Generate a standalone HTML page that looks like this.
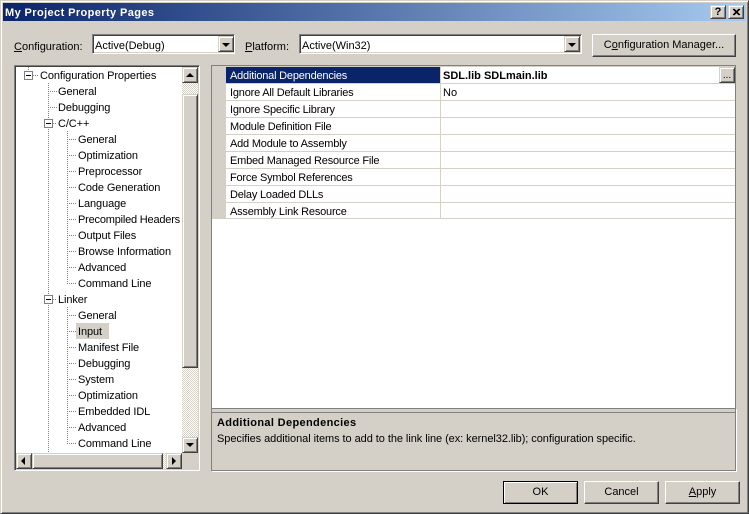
<!DOCTYPE html>
<html><head><meta charset="utf-8"><style>
html,body{margin:0;padding:0;background:#d4d0c8}
body{width:749px;height:514px;position:relative;overflow:hidden;font:11px/16px "Liberation Sans",Arial,sans-serif;color:#000}
div{position:absolute;box-sizing:border-box}
.t{white-space:nowrap;height:16px;margin-top:1px}
.n{letter-spacing:-.1px}
.g{letter-spacing:-.2px}
.raised{background:#d4d0c8;border:1px solid;border-color:#d4d0c8 #404040 #404040 #d4d0c8;box-shadow:inset 1px 1px 0 #fff,inset -1px -1px 0 #808080}
.sunken{border:1px solid;border-color:#808080 #fff #fff #808080;box-shadow:inset 1px 1px 0 #404040,inset -1px -1px 0 #d4d0c8;background:#fff}
.hatch{background-color:#fff;background-image:conic-gradient(#d4d0c8 25%,#fff 0 50%,#d4d0c8 0 75%,#fff 0);background-size:2px 2px}
.vd{width:1px;background-image:linear-gradient(#808080 50%,transparent 50%);background-size:1px 2px}
.hd{height:1px;background-image:linear-gradient(90deg,#808080 50%,transparent 50%);background-size:2px 1px}
.box{width:9px;height:9px;border:1px solid #808080;background:#fff}
.box:after{content:"";position:absolute;left:1px;top:3px;width:5px;height:1px;background:#000}
.tri{width:0;height:0;border-style:solid;border-color:transparent}
.line{height:1px;background:#d4d0c8}
u{text-decoration:underline}
.btn{text-align:center;border-color:#fff #404040 #404040 #fff;box-shadow:inset -1px -1px 0 #808080}
</style></head><body>
<div style="left:0;top:0;width:749px;height:514px;border:1px solid;border-color:#d4d0c8 #404040 #404040 #d4d0c8;box-shadow:inset 1px 1px 0 #fff,inset -1px -1px 0 #808080"></div>
<div style="left:3px;top:3px;width:743px;height:18px;background:linear-gradient(90deg,#0a246a,#a6caf0)"></div>
<div class="t" style="left:5px;top:4px;color:#fff;font-weight:bold;letter-spacing:.4px;line-height:17px">My Project Property Pages</div>
<div class="raised" style="left:710px;top:5px;width:16px;height:14px;font:bold 11px/12px 'Liberation Sans',sans-serif;text-align:center">?</div>
<div class="raised" style="left:728px;top:5px;width:16px;height:14px"><svg width="14" height="12" style="position:absolute;left:0;top:0"><path d="M4 3l6 6M5 3l6 6M10 3l-6 6M11 3l-6 6" stroke="#000" fill="none"/></svg></div>

<div class="t" style="left:14px;top:38px"><u>C</u>onfiguration:</div>
<div class="sunken" style="left:92px;top:34px;width:143px;height:20px"></div>
<div class="t" style="left:95px;top:37px">Active(Debug)</div>
<div class="raised" style="left:218px;top:36px;width:16px;height:16px"></div>
<div class="tri" style="left:222px;top:43px;border-width:4px 4px 0;border-top-color:#000"></div>
<div class="t" style="left:245px;top:38px"><u>P</u>latform:</div>
<div class="sunken" style="left:299px;top:34px;width:283px;height:20px"></div>
<div class="t" style="left:302px;top:37px">Active(Win32)</div>
<div class="raised" style="left:564px;top:36px;width:16px;height:16px"></div>
<div class="tri" style="left:568px;top:43px;border-width:4px 4px 0;border-top-color:#000"></div>
<div class="raised btn" style="left:592px;top:34px;width:144px;height:23px;line-height:21px">C<u>o</u>nfiguration Manager...</div>

<!-- tree -->
<div class="sunken" style="left:14px;top:65px;width:186px;height:406px"></div>
<div class="vd" style="left:28px;top:67px;height:6px"></div>
<div class="hd" style="left:33px;top:75px;width:6px"></div>
<div class="box" style="left:24px;top:71px"></div>
<div class="t n" style="left:40px;top:67px">Configuration Properties</div>

<div class="vd" style="left:48px;top:83px;height:369px"></div>
<div class="hd" style="left:48px;top:91px;width:9px"></div><div class="t n" style="left:58px;top:83px">General</div>
<div class="hd" style="left:48px;top:107px;width:9px"></div><div class="t n" style="left:58px;top:99px">Debugging</div>
<div class="box" style="left:44px;top:119px"></div><div class="hd" style="left:53px;top:123px;width:4px"></div><div class="t n" style="left:58px;top:115px">C/C++</div>
<div class="vd" style="left:67px;top:131px;height:152px"></div>
<div class="hd" style="left:67px;top:139px;width:9px"></div><div class="t n" style="left:78px;top:131px">General</div>
<div class="hd" style="left:67px;top:155px;width:9px"></div><div class="t n" style="left:78px;top:147px">Optimization</div>
<div class="hd" style="left:67px;top:171px;width:9px"></div><div class="t n" style="left:78px;top:163px">Preprocessor</div>
<div class="hd" style="left:67px;top:187px;width:9px"></div><div class="t n" style="left:78px;top:179px">Code Generation</div>
<div class="hd" style="left:67px;top:203px;width:9px"></div><div class="t n" style="left:78px;top:195px">Language</div>
<div class="hd" style="left:67px;top:219px;width:9px"></div><div class="t g" style="left:78px;top:211px">Precompiled Headers</div>
<div class="hd" style="left:67px;top:235px;width:9px"></div><div class="t n" style="left:78px;top:227px">Output Files</div>
<div class="hd" style="left:67px;top:251px;width:9px"></div><div class="t n" style="left:78px;top:243px">Browse Information</div>
<div class="hd" style="left:67px;top:267px;width:9px"></div><div class="t n" style="left:78px;top:259px">Advanced</div>
<div class="hd" style="left:67px;top:283px;width:9px"></div><div class="t n" style="left:78px;top:275px">Command Line</div>
<div class="box" style="left:44px;top:295px"></div><div class="hd" style="left:53px;top:299px;width:4px"></div><div class="t n" style="left:58px;top:291px">Linker</div>
<div class="vd" style="left:67px;top:307px;height:136px"></div>
<div class="hd" style="left:67px;top:315px;width:9px"></div><div class="t n" style="left:78px;top:307px">General</div>
<div style="left:76px;top:323px;width:33px;height:16px;background:#d4d0c8"></div>
<div class="hd" style="left:67px;top:331px;width:9px"></div><div class="t n" style="left:78px;top:323px">Input</div>
<div class="hd" style="left:67px;top:347px;width:9px"></div><div class="t n" style="left:78px;top:339px">Manifest File</div>
<div class="hd" style="left:67px;top:363px;width:9px"></div><div class="t n" style="left:78px;top:355px">Debugging</div>
<div class="hd" style="left:67px;top:379px;width:9px"></div><div class="t n" style="left:78px;top:371px">System</div>
<div class="hd" style="left:67px;top:395px;width:9px"></div><div class="t n" style="left:78px;top:387px">Optimization</div>
<div class="hd" style="left:67px;top:411px;width:9px"></div><div class="t n" style="left:78px;top:403px">Embedded IDL</div>
<div class="hd" style="left:67px;top:427px;width:9px"></div><div class="t n" style="left:78px;top:419px">Advanced</div>
<div class="hd" style="left:67px;top:443px;width:9px"></div><div class="t n" style="left:78px;top:435px">Command Line</div>

<!-- vertical scrollbar -->
<div class="hatch" style="left:182px;top:83px;width:16px;height:355px"></div>
<div class="raised" style="left:182px;top:67px;width:16px;height:16px"></div>
<div class="tri" style="left:186px;top:73px;border-width:0 4px 4px;border-bottom-color:#000"></div>
<div class="raised" style="left:182px;top:94px;width:16px;height:274px"></div>
<div class="raised" style="left:182px;top:437px;width:16px;height:16px"></div>
<div class="tri" style="left:186px;top:443px;border-width:4px 4px 0;border-top-color:#000"></div>
<!-- horizontal scrollbar -->
<div style="left:16px;top:453px;width:182px;height:16px;background:#d4d0c8"></div>
<div class="hatch" style="left:32px;top:453px;width:135px;height:16px"></div>
<div class="raised" style="left:16px;top:453px;width:16px;height:16px"></div>
<div class="tri" style="left:21px;top:457px;border-width:4px 4px 4px 0;border-right-color:#000"></div>
<div class="raised" style="left:32px;top:453px;width:131px;height:16px"></div>
<div class="raised" style="left:166px;top:453px;width:16px;height:16px"></div>
<div class="tri" style="left:172px;top:457px;border-width:4px 0 4px 4px;border-left-color:#000"></div>

<!-- grid -->
<div style="left:211px;top:65px;width:525px;height:344px;background:#fff;border:1px solid #808080;box-shadow:inset 0 1px 0 #d4d0c8"></div>
<div style="left:212px;top:66px;width:14px;height:153px;background:#d4d0c8"></div>
<div style="left:226px;top:67px;width:214px;height:16px;background:#0a246a"></div>
<div class="line" style="left:226px;top:83px;width:509px"></div>
<div class="line" style="left:226px;top:100px;width:509px"></div>
<div class="line" style="left:226px;top:117px;width:509px"></div>
<div class="line" style="left:226px;top:134px;width:509px"></div>
<div class="line" style="left:226px;top:151px;width:509px"></div>
<div class="line" style="left:226px;top:168px;width:509px"></div>
<div class="line" style="left:226px;top:185px;width:509px"></div>
<div class="line" style="left:226px;top:202px;width:509px"></div>
<div class="line" style="left:226px;top:218px;width:509px"></div>
<div style="left:440px;top:67px;width:1px;height:152px;background:#d4d0c8"></div>
<div class="t g" style="left:230px;top:67px;color:#fff">Additional Dependencies</div>
<div class="t g" style="left:230px;top:84px">Ignore All Default Libraries</div>
<div class="t g" style="left:230px;top:101px">Ignore Specific Library</div>
<div class="t g" style="left:230px;top:118px">Module Definition File</div>
<div class="t g" style="left:230px;top:135px">Add Module to Assembly</div>
<div class="t g" style="left:230px;top:152px">Embed Managed Resource File</div>
<div class="t g" style="left:230px;top:169px">Force Symbol References</div>
<div class="t g" style="left:230px;top:186px">Delay Loaded DLLs</div>
<div class="t g" style="left:230px;top:203px">Assembly Link Resource</div>
<div class="t" style="left:443px;top:67px;font-weight:bold">SDL.lib SDLmain.lib</div>
<div class="t" style="left:443px;top:84px">No</div>
<div class="raised" style="left:719px;top:67px;width:16px;height:16px;font-size:10px;line-height:16px;text-align:center">...</div>

<!-- description -->
<div style="left:211px;top:408px;width:525px;height:63px;border:1px solid #808080;box-shadow:1px 1px 0 #fff"></div>
<div style="left:212px;top:412px;width:523px;height:1px;background:#808080"></div>
<div class="t" style="left:217px;top:414px;font-weight:bold;letter-spacing:.35px">Additional Dependencies</div>
<div class="t" style="left:217px;top:430px;letter-spacing:-.06px">Specifies additional items to add to the link line (ex: kernel32.lib); configuration specific.</div>

<!-- buttons -->
<div class="raised btn" style="left:503px;top:481px;width:75px;height:23px;line-height:21px;border-color:#000;box-shadow:inset 1px 1px 0 #fff,inset -1px -1px 0 #808080">OK</div>
<div class="raised btn" style="left:584px;top:481px;width:75px;height:23px;line-height:21px">Cancel</div>
<div class="raised btn" style="left:665px;top:481px;width:75px;height:23px;line-height:21px"><u>A</u>pply</div>
</body></html>
